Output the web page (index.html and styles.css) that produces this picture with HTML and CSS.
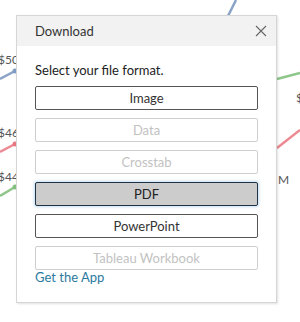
FILE: index.html
```html
<!DOCTYPE html>
<html>
<head>
<meta charset="utf-8">
<link rel="stylesheet" href="styles.css">
</head>
<body>
<div class="stage">
  <svg class="chart" width="300" height="322" viewBox="0 0 300 322">
    <polyline points="0,79 15,71" class="ln blue"/>
    <circle cx="15" cy="71" r="2.5" class="dot-blue"/>
    <polyline points="228,16 236,0" class="ln blue"/>
    <polyline points="0,152 15,144" class="ln pink"/>
    <circle cx="15" cy="144" r="2.5" class="dot-pink"/>
    <polyline points="277,148 300,130" class="ln pink"/>
    <polyline points="0,196 15,187" class="ln green"/>
    <circle cx="15" cy="187" r="2.5" class="dot-green"/>
    <polyline points="277,79 300,73" class="ln green"/>
    <text x="-2" y="64" class="lbl">$50</text>
    <text x="-2" y="137" class="lbl">$46</text>
    <text x="-2" y="181" class="lbl">$44</text>
    <text x="296" y="102" class="lbl">$</text>
    <text x="278" y="184" class="lbl">M</text>
  </svg>

  <div class="dialog">
    <div class="dialog-header">
      <span class="dialog-title">Download</span>
      <svg class="close" width="12" height="12" viewBox="0 0 12 12">
        <path d="M1 1 L11 11 M11 1 L1 11" stroke="#666" stroke-width="1.1" fill="none"/>
      </svg>
    </div>
    <div class="dialog-body">
      <p class="prompt">Select your file format.</p>
      <div class="options">
        <button class="opt">Image</button>
        <button class="opt disabled">Data</button>
        <button class="opt disabled">Crosstab</button>
        <button class="opt selected">PDF</button>
        <button class="opt">PowerPoint</button>
        <button class="opt disabled">Tableau Workbook</button>
      </div>
      <a class="app-link">Get the App</a>
    </div>
  </div>
</div>
</body>
</html>
```

FILE: styles.css
```css
html, body {
  margin: 0;
  padding: 0;
  background: #ffffff;
}

.stage {
  position: relative;
  width: 300px;
  height: 322px;
  overflow: hidden;
  font-family: Lato, "Liberation Sans", sans-serif;
}

.chart {
  position: absolute;
  left: 0;
  top: 0;
}

.ln {
  fill: none;
  stroke-width: 2.5;
}
.blue { stroke: #8aa3c6; }
.pink { stroke: #ec8a94; }
.green { stroke: #8ec68a; }
.dot-blue { fill: #7f9cc4; }
.dot-pink { fill: #e97682; }
.dot-green { fill: #82c17e; }

.lbl {
  font-family: Lato, "Liberation Sans", sans-serif;
  font-size: 12px;
  fill: #555;
}

.dialog {
  position: absolute;
  left: 16px;
  top: 15px;
  width: 259px;
  height: 286px;
  background: #fff;
  border: 1px solid #d6d6d6;
  box-shadow: 1px 1px 2px rgba(0, 0, 0, 0.12);
  display: flex;
  flex-direction: column;
}

.dialog-header {
  height: 30px;
  background: #f2f2f2;
  display: flex;
  align-items: center;
  justify-content: space-between;
  padding: 0 9px 0 18px;
}

.dialog-title {
  font-size: 13px;
  color: #333;
}

.close {
  display: block;
}

.dialog-body {
  padding: 16px 18px 0 18px;
  display: flex;
  flex-direction: column;
}

.prompt {
  margin: 0;
  font-size: 13px;
  line-height: 16px;
  color: #222;
}

.options {
  margin-top: 8px;
  display: flex;
  flex-direction: column;
  gap: 8px;
}

.opt {
  height: 24px;
  margin: 0;
  padding: 0;
  border: 1px solid #555;
  border-radius: 2px;
  background: #fff;
  font-family: Lato, "Liberation Sans", sans-serif;
  font-size: 13px;
  color: #333;
  text-align: center;
}

.opt.disabled {
  border-color: #cfcfcf;
  color: #c2c2c2;
}

.opt.selected {
  background: #cccccc;
  border-color: #1e3446;
  color: #222;
  box-shadow: 0 0 3px 1px rgba(120, 180, 220, 0.45);
}

.app-link {
  margin-top: 0;
  font-size: 13px;
  line-height: 15px;
  color: #2b7a9e;
}
```
